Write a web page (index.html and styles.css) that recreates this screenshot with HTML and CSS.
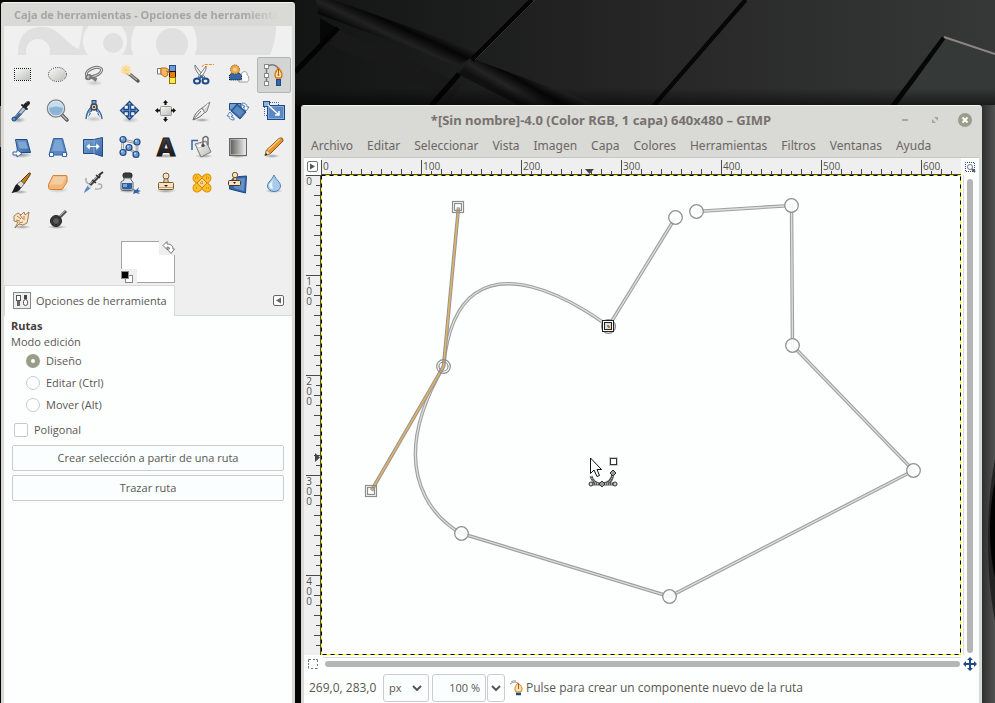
FILE: index.html
```html
<!DOCTYPE html>
<html lang="es">
<head>
<meta charset="utf-8">
<title>GIMP</title>
<link rel="stylesheet" href="styles.css">
</head>
<body>
<svg class="wallpaper" viewBox="0 0 995 703" preserveAspectRatio="xMidYMin slice" aria-hidden="true">
  <defs>
    <linearGradient id="wall" x1="295" y1="60" x2="995" y2="60" gradientUnits="userSpaceOnUse"><stop offset="0" stop-color="#131414"/><stop offset=".5" stop-color="#262626"/><stop offset="1" stop-color="#363837"/></linearGradient>
    <linearGradient id="ridge" x1="400" y1="14" x2="386" y2="44" gradientUnits="userSpaceOnUse"><stop offset="0" stop-color="#242424"/><stop offset=".35" stop-color="#050505"/><stop offset=".7" stop-color="#222"/><stop offset="1" stop-color="#080808"/></linearGradient>
    <linearGradient id="ridge2" x1="530" y1="71" x2="514" y2="99" gradientUnits="userSpaceOnUse"><stop offset="0" stop-color="#2a2a2a"/><stop offset=".4" stop-color="#060606"/><stop offset=".75" stop-color="#242424"/><stop offset="1" stop-color="#101010"/></linearGradient>
    <linearGradient id="side" x1="982" y1="0" x2="995" y2="0" gradientUnits="userSpaceOnUse"><stop offset="0" stop-color="#2f2f2f"/><stop offset="1" stop-color="#515151"/></linearGradient>
    <linearGradient id="shade" x1="0" y1="88" x2="0" y2="106" gradientUnits="userSpaceOnUse"><stop offset="0" stop-color="#000" stop-opacity="0"/><stop offset="1" stop-color="#000" stop-opacity=".55"/></linearGradient>
    <linearGradient id="bl" x1="0" y1="0" x2="1" y2="1"><stop offset="0" stop-color="#86add9"/><stop offset="1" stop-color="#3465a4"/></linearGradient>
    <linearGradient id="gr" x1="0" y1="0" x2="1" y2="1"><stop offset="0" stop-color="#fbfbfa"/><stop offset="1" stop-color="#babdb6"/></linearGradient>
    <linearGradient id="dk" x1="0" y1="0" x2="0" y2="1"><stop offset="0" stop-color="#4a4a4a"/><stop offset="1" stop-color="#0c0c0c"/></linearGradient>
    <linearGradient id="fade" x1="0" y1="0" x2="1" y2="0"><stop offset="0" stop-color="#555753"/><stop offset="1" stop-color="#f4f4f3"/></linearGradient>
    <radialGradient id="glow"><stop offset="0" stop-color="#fff"/><stop offset=".4" stop-color="#ffe79a"/><stop offset="1" stop-color="#fcd27a" stop-opacity="0"/></radialGradient>
    <radialGradient id="shadow"><stop offset="0" stop-color="#000" stop-opacity=".35"/><stop offset="1" stop-color="#000" stop-opacity="0"/></radialGradient>
  </defs>
  <rect width="995" height="703" fill="#060606"/>
  <rect x="295" width="700" height="106" fill="url(#wall)"/>
  <path d="M316 0H334L480 52L458 66L318 14Z" fill="url(#ridge)"/>
  <path d="M338 30L462 84L452 98L330 45Z" fill="#191919"/>
  <path d="M320 18L338 29L320 44Z" fill="#070707"/>
  <path d="M470 60L476 60L600 106H520L458 74Z" fill="url(#ridge2)"/>
  <path d="M532 0L472 60M459 74L431 106M338 28L295 72" stroke="#030303" stroke-width="5"/>
  <path d="M746 0L654 106M944 38L893 106" stroke="#070707" stroke-width="5"/>
  <path d="M749 0L657 106M535 0L475 60" stroke="#343434"/>
  <path d="M946 38L995 56V106H897Z" fill="#353937"/>
  <path d="M944 37L995 54" stroke="#8d8583" stroke-width="2"/>
  <rect x="295" y="86" width="700" height="20" fill="url(#shade)"/>
  <rect x="982" y="105" width="13" height="598" fill="url(#side)"/>
  <ellipse cx="1010" cy="540" rx="22" ry="110" fill="#222"/>
  <ellipse cx="1010" cy="530" rx="20" ry="72" fill="#020202"/>
  <path d="M0 106V147" stroke="#8a7f78" stroke-width="2"/>
</svg>

<main class="desktop">
<section class="window toolbox" aria-label="Caja de herramientas">
  <header class="titlebar titlebar-dim"><h1>Caja de herramientas - Opciones de herramienta</h1></header>
  <svg class="banner" viewBox="0 0 288 30" preserveAspectRatio="xMinYMin slice" aria-hidden="true">
    <rect width="288" height="30" fill="#f0f0f0"/>
    <path d="M14 29C14 10 22 1 38 1C56 1 60 17 75 23L79 0H272C272 12 269 22 266 29Z" fill="#e0e0e0"/>
    <circle cx="34" cy="25" r="12" fill="#f0f0f0"/>
    <circle cx="101" cy="15" r="22" fill="#f0f0f0"/><circle cx="109" cy="17" r="10" fill="#e0e0e0"/>
    <circle cx="160" cy="17" r="33" fill="#f0f0f0"/><circle cx="168" cy="18" r="16" fill="#e0e0e0"/>
    <path d="M0 29H288V30H0Z" fill="#efefef"/>
  </svg>
  <div class="tools">
    <button class="tool" aria-label="Selección rectangular"><svg viewBox="0 0 24 24"><rect x="4.500" y="5.500" width="16" height="12" fill="url(#gr)" stroke="#fff"/><rect x="4.500" y="5.500" width="16" height="12" fill="none" stroke="#111" stroke-dasharray="1 1" stroke-dashoffset=".5"/></svg></button>
    <button class="tool" aria-label="Selección elíptica"><svg viewBox="0 0 24 24"><ellipse cx="11.500" cy="11.500" rx="9" ry="7" fill="url(#gr)" stroke="#fff"/><ellipse cx="11.500" cy="11.500" rx="9" ry="7" fill="none" stroke="#111" stroke-dasharray="1 1.200"/></svg></button>
    <button class="tool" aria-label="Selección libre"><svg viewBox="0 0 24 24" fill="none"><ellipse cx="12.500" cy="20" rx="9" ry="3" fill="url(#shadow)" opacity=".5"/><ellipse cx="12" cy="9" rx="8" ry="4" transform="rotate(-20 12 9)" stroke="#777" stroke-width="3"/><ellipse cx="12" cy="9" rx="8" ry="4" transform="rotate(-20 12 9)" stroke="#ddd"/><path d="M7 12C3 13 3 17 7 16C10 15 9 12 7 12M9 14L15 16M9 14L14 18" stroke="#777" stroke-width="2"/><path d="M7 13C5 13 5 15 7 15" stroke="#ddd"/></svg></button>
    <button class="tool" aria-label="Selección difusa"><svg viewBox="0 0 24 24"><path d="M9 9L20 18" stroke="#5a5651" stroke-width="3.500" stroke-linecap="round"/><path d="M9 9L19 17" stroke="#b5b1a8" stroke-width="1.500"/><path d="M9 8L12 11" stroke="#fff3c5" stroke-width="3"/><circle cx="8" cy="7" r="6" fill="url(#glow)"/><path d="M8 3V11M4 7H12M5 4L11 10M11 4L5 10" stroke="#f0b65c" stroke-width=".5"/></svg></button>
    <button class="tool" aria-label="Selección por color"><svg viewBox="0 0 24 24"><path d="M3.500 5.500H7V11H3.500Z" fill="#fff" stroke="#777"/><path d="M7 5H12L15 7V9L13 10L14 12L11 14L7 11Z" fill="#f5b862" stroke="#b96a10"/><rect x="15.500" y="2.500" width="6" height="6" fill="#6f9bd0" stroke="#204a87"/><rect x="15.500" y="8.500" width="6" height="6" fill="#f57900" stroke="#111"/><rect x="15.500" y="14.500" width="6" height="6" fill="#fce94f" stroke="#8a7b00"/><path d="M12 8L18 10" stroke="#b96a10"/></svg></button>
    <button class="tool" aria-label="Tijeras"><svg viewBox="0 0 24 24" fill="none"><path d="M5 2C4 6 9 12 13 16L15 14C11 10 8 6 5 2Z" fill="#eee" stroke="#777"/><path d="M16 3C17 7 13 11 10 16L8 14C11 10 14 6 16 3Z" fill="#fff" stroke="#777"/><ellipse cx="7" cy="18" rx="3" ry="2.500" stroke="#204a87" stroke-width="2"/><ellipse cx="15.500" cy="18" rx="3" ry="2.500" stroke="#204a87" stroke-width="2"/><path d="M9 16L11 13L14 16" stroke="#3465a4" stroke-width="2"/><path d="M12 4L14 1.500H24" stroke="#ee8b1b" stroke-dasharray="3 1"/></svg></button>
    <button class="tool" aria-label="Selección de frente"><svg viewBox="0 0 24 24"><path d="M13 19C11 15 15 14 15 12C16 7 22 8 21 12C24 13 23 20 20 19Z" fill="#fff" stroke="#999"/><path d="M3.500 17V12L7 9H12L15.500 12V17Z" fill="#3465a4" stroke="#111" stroke-dasharray="1 1"/><circle cx="9" cy="6.500" r="4.500" fill="#f2a743" stroke="#6b4c14" stroke-dasharray="1 1"/><circle cx="9" cy="6.500" r="2" fill="#fbd087"/></svg></button>
    <button class="tool is-active" aria-label="Rutas" aria-pressed="true"><svg viewBox="0 0 24 24" fill="none"><path d="M4.500 3V20M5 4C10 0 15 2 17 7" stroke="#777" stroke-width="1.500"/><rect x="2.500" y="1.500" width="4" height="4" fill="#fff" stroke="#888"/><rect x="2.500" y="10.500" width="4" height="4" fill="#fff" stroke="#888"/><rect x="2.500" y="18.500" width="4" height="4" fill="#fff" stroke="#888"/><path d="M16.500 5C13 9 12 12 14 15H19C21 12 20 9 16.500 5Z" fill="#fbe2b6" stroke="#d87a0e" stroke-width="1.500"/><path d="M16.500 6V11" stroke="#a85a00"/><circle cx="16.500" cy="12" r="1" fill="#a85a00"/><rect x="14.500" y="16.500" width="4" height="6" fill="#3465a4" stroke="#204a87"/></svg></button>

    <button class="tool" aria-label="Recoge-color"><svg viewBox="0 0 24 24"><ellipse cx="8" cy="21" rx="8" ry="3" fill="url(#shadow)"/><path d="M3 20L13 8L16 10L6 21Z" fill="#a8c4e4" stroke="#555"/><path d="M3 21L9 14L12 15L6 21Z" fill="#3465a4"/><circle cx="4" cy="20" r="2" fill="#5c8bc5" stroke="#204a87"/><path d="M12 6L17 10" stroke="#222" stroke-width="2" stroke-linecap="round"/><path d="M15 7L18 4" stroke="#222" stroke-width="4" stroke-linecap="round"/><path d="M16 4L18 2" stroke="#777"/></svg></button>
    <button class="tool" aria-label="Ampliación"><svg viewBox="0 0 24 24"><path d="M16 16L21 21" stroke="#555" stroke-width="3.500" stroke-linecap="round"/><path d="M16 16L21 21" stroke="#bbb" stroke-width="1.500"/><circle cx="10" cy="9.500" r="8.500" fill="#8db4d6" stroke="#808080" stroke-width="1.500"/><path d="M3 9A7 7 0 0 1 17 9Q10 6 3 9Z" fill="#c6deee"/><circle cx="10" cy="9.500" r="7.500" fill="none" stroke="#e4edf3"/></svg></button>
    <button class="tool" aria-label="Medida"><svg viewBox="0 0 24 24" fill="none"><ellipse cx="12" cy="20" rx="10" ry="3" fill="url(#shadow)" opacity=".5"/><path d="M9 8C6 11 4 15 4 20L8 15L11 8M14 8C17 11 20 15 20 20L16 15L13 8" fill="#729fcf" stroke="#204a87"/><path d="M7 14L5 20M17 14L19 20M8 14Q12 11 16 14" stroke="#fff"/><rect x="10" y="1.500" width="4" height="4" fill="#729fcf" stroke="#204a87"/><circle cx="12" cy="8" r="3" fill="#ccc" stroke="#444" stroke-width="1.500"/><circle cx="12" cy="8" r="1" fill="#222"/></svg></button>
    <button class="tool" aria-label="Mover"><svg viewBox="0 0 24 24"><ellipse cx="12" cy="21" rx="9" ry="3" fill="url(#shadow)" opacity=".6"/><path d="M11.500 2.500L15 6H12.500V10.500H17V8L20.500 11.500L17 15V12.500H12.500V17H15L11.500 20.500L8 17H10.500V12.500H6V15L2.500 11.500L6 8V10.500H10.500V6H8Z" fill="#7da7d8" stroke="#204a87" stroke-width="1.300"/></svg></button>
    <button class="tool" aria-label="Alineación"><svg viewBox="0 0 24 24"><rect x="6.500" y="7.500" width="11" height="9" rx="1" fill="url(#gr)" stroke="#999"/><path d="M11.500 1L14 4H12.500V6H10.500V4H9ZM11.500 23L9 20H10.500V18H12.500V20H14ZM1 11.500L4 9V10.500H6V12.500H4V14ZM22 11.500L19 14V12.500H17V10.500H19V9Z" fill="#111"/></svg></button>
    <button class="tool" aria-label="Recorte"><svg viewBox="0 0 24 24"><ellipse cx="12" cy="21" rx="8" ry="2" fill="url(#shadow)"/><path d="M3 21C5 14 8 12 12 9L15 13C12 17 8 19 3 21Z" fill="#eee" stroke="#666"/><path d="M3 21L11 12" stroke="#777"/><path d="M12 9L20 3L17 12L15 14Z" fill="#d3d7cf" stroke="#888"/><path d="M14 10L18 5" stroke="#fff"/></svg></button>
    <button class="tool" aria-label="Rotar"><svg viewBox="0 0 24 24"><path d="M3.500 4.500H15V11H3.500Z" fill="#729fcf" stroke="#204a87"/><path d="M11 5L20 13L14 20L5 12Z" fill="#3465a4" stroke="#204a87"/><path d="M11 7L18 13L14 18L7 12Z" fill="#5b89c3"/><path d="M16 4Q21 4 21 8H23L20 12L17 8H19Q19 6 16 6ZM8 21Q3 21 3 17H1L4 13L7 17H5Q5 19 8 19Z" fill="#fff" stroke="#3465a4" stroke-width=".8"/></svg></button>
    <button class="tool" aria-label="Escalar"><svg viewBox="0 0 24 24"><rect x="5.500" y="6.500" width="17" height="14" fill="#5b89c3" stroke="#204a87"/><rect x="6.500" y="7.500" width="15" height="12" fill="none" stroke="#87acd9"/><rect x="1.500" y="2.500" width="6" height="5" fill="#8fb2dc" stroke="#204a87"/><path d="M8 3.500H16.500V7M2.500 8V16.500H5" fill="none" stroke="#3465a4" stroke-dasharray="1 1"/><path d="M6 6L17 16M17 12V16H13" fill="none" stroke="#fff" stroke-width="1.500"/></svg></button>

    <button class="tool" aria-label="Inclinar"><svg viewBox="0 0 24 24"><ellipse cx="12" cy="20" rx="10" ry="3" fill="url(#shadow)"/><path d="M5.500 4.500H17L20.500 17.500H8Z" fill="url(#bl)" stroke="#204a87"/><path d="M7 6H16L18.500 14H9Z" fill="#7ea5d4" stroke="#3465a4" stroke-width=".5"/><path d="M3 17H7V14.500L12 18.500L7 22V20H3Z" fill="#fff" stroke="#3465a4"/></svg></button>
    <button class="tool" aria-label="Perspectiva"><svg viewBox="0 0 24 24"><path d="M7.500 3.500H16.500L21 20H3Z" fill="#5b89c3" stroke="#3465a4"/><path d="M9 5H15L18 16H6Z" fill="#7ba3d3"/><path d="M3.500 17.500H7.500V21.500H3.500ZM16.500 17.500H20.500V21.500H16.500Z" fill="#fff" stroke="#3465a4"/></svg></button>
    <button class="tool" aria-label="Voltear"><svg viewBox="0 0 24 24"><path d="M1.500 4.500H12L20.500 2.500V21.500L12 18.500H1.500Z" fill="url(#bl)" stroke="#204a87"/><path d="M12 4.500V18.500" stroke="#87acd9"/><path d="M4 11.500L8 7.500V10.500H14V7.500L18 11.500L14 15.500V12.500H8V15.500Z" fill="#fff" stroke="#3465a4" stroke-width=".6"/></svg></button>
    <button class="tool" aria-label="Transformación de jaula"><svg viewBox="0 0 24 24"><path d="M5 5L19 8L19 20L11 13L4 18Z" fill="none" stroke="#888" stroke-width="2.500"/><path d="M5 5L19 8L19 20L11 13L4 18Z" fill="none" stroke="#eee"/><g fill="#6f9bd0" stroke="#204a87" stroke-width="1.200"><circle cx="5" cy="4.500" r="3"/><circle cx="19" cy="7" r="3"/><circle cx="11" cy="12.500" r="3"/><circle cx="5" cy="17.500" r="3"/><circle cx="18" cy="19.500" r="3"/></g><g fill="#c3d8ef"><circle cx="4" cy="3.500" r="1"/><circle cx="18" cy="6" r="1"/><circle cx="10" cy="11.500" r="1"/><circle cx="4" cy="16.500" r="1"/><circle cx="17" cy="18.500" r="1"/></g></svg></button>
    <button class="tool" aria-label="Texto"><svg viewBox="0 0 24 24"><ellipse cx="12" cy="21" rx="11" ry="2" fill="url(#shadow)"/><text class="glyph" x="12" y="21">A</text></svg></button>
    <button class="tool" aria-label="Relleno"><svg viewBox="0 0 24 24"><ellipse cx="14" cy="21" rx="9" ry="2" fill="url(#shadow)"/><path d="M2 15V5.500H8" fill="none" stroke="#3465a4" stroke-width="1.500"/><path d="M5 9L16 6L21 17L11 22Z" fill="url(#gr)" stroke="#777"/><path d="M6 10L15 7L17 10L8 13Z" fill="#fff" stroke="#aaa" stroke-width=".6"/><path d="M13 10V3Q16 0 18 3V10" fill="none" stroke="#666" stroke-width="1.400"/><circle cx="13" cy="10.500" r="1.800" fill="#555"/></svg></button>
    <button class="tool" aria-label="Degradado"><svg viewBox="0 0 24 24"><ellipse cx="12" cy="21" rx="10" ry="2" fill="url(#shadow)"/><rect x="3.500" y="3.500" width="17" height="17" fill="url(#fade)" stroke="#666"/><rect x="4.500" y="4.500" width="15" height="15" fill="none" stroke="#ddd" stroke-opacity=".5"/></svg></button>
    <button class="tool" aria-label="Lápiz"><svg viewBox="0 0 24 24"><ellipse cx="10" cy="21" rx="8" ry="2" fill="url(#shadow)"/><path d="M3 20.500L4.500 15L17 3.500Q21 1.500 21 6L8.500 18.500Z" fill="#e9952f" stroke="#8a5310"/><path d="M6 15L18 4" stroke="#fbc77d" stroke-width="1.500"/><path d="M3 20.500L4.500 15L8.500 18.500Z" fill="#f3dfc0" stroke="#8a6a3a" stroke-width=".6"/><path d="M3 20.500L4 18L5.500 19.500Z" fill="#111"/></svg></button>

    <button class="tool" aria-label="Pincel"><svg viewBox="0 0 24 24"><ellipse cx="10" cy="21" rx="8" ry="2" fill="url(#shadow)"/><path d="M11 10L19 2Q21 1 20 4L14 13Z" fill="#c27e1c" stroke="#5a3a0c"/><path d="M11 10L14 13L11 17L7 13Z" fill="#ddd" stroke="#777"/><path d="M7 13L11 17C9 21 6 21 1.500 22C4 19 4 15 7 13Z" fill="#1c1c1c"/></svg></button>
    <button class="tool" aria-label="Goma de borrar"><svg viewBox="0 0 24 24"><ellipse cx="12" cy="19" rx="11" ry="3" fill="url(#shadow)" opacity=".5"/><path d="M2.500 13.500L7 4.500H20Q21.500 4.500 21 7V11L16 18.500H4Q2 18 2.500 13.500Z" fill="#f3b77a" stroke="#d8812f"/><path d="M3.500 13.500L7.500 5.500H20L16 13.500Z" fill="#f5cda2"/></svg></button>
    <button class="tool" aria-label="Aerógrafo"><svg viewBox="0 0 24 24"><path d="M16 13C21 12 22 19 13 18M4 7Q3 13 9 13" fill="none" stroke="#aaa" stroke-width="1.500"/><path d="M8 14L18 4" stroke="#444" stroke-width="3"/><path d="M8 13L18 3" stroke="#aaa"/><path d="M14 4L18 7M10 9L14 12" stroke="#333" stroke-width="1.500"/><path d="M17 4L21 1" stroke="#333" stroke-width="2"/><path d="M6 14L9 17L5 20L2 22L3 19Z" fill="#5b89c3"/><path d="M6 14L9 17" stroke="#ddd" stroke-width="2"/></svg></button>
    <button class="tool" aria-label="Tinta"><svg viewBox="0 0 24 24"><ellipse cx="10" cy="20" rx="9" ry="2" fill="url(#shadow)"/><rect x="5" y="2" width="9" height="5" rx="2" fill="#3c3c3c" stroke="#222"/><path d="M6 7H13V9L15 11V18Q15 19.500 13 19.500H5Q3 19.500 3 18V11L6 9Z" fill="#e2e6ea" stroke="#666"/><path d="M4 12H14V17Q14 18.500 12 18.500H6Q4 18.500 4 17Z" fill="#2f5f9f"/><path d="M5 13H9V16H5Z" fill="#7ea5d4"/><path d="M15 18L18 19L21 16L20 19L23 20L20 21L22 23L18 22L15 23L16 20Z" fill="#3465a4"/></svg></button>
    <button class="tool" aria-label="Clonar"><svg viewBox="0 0 24 24"><ellipse cx="12" cy="20" rx="10" ry="2" fill="url(#shadow)"/><path d="M10.500 7H13.500L14.500 12H9.500Z" fill="#e4c9a0" stroke="#7a5b2e"/><circle cx="12" cy="5" r="3" fill="#f3e2c7" stroke="#7a5b2e"/><rect x="4.500" y="11.500" width="15" height="7" rx="1" fill="#f6e3c6" stroke="#7a5b2e"/><path d="M5 16.500H19" stroke="#caa56c"/><path d="M10 14H14L12 16Z" fill="#222"/></svg></button>
    <button class="tool" aria-label="Sanear"><svg viewBox="0 0 24 24"><g stroke-linecap="round"><path d="M7 7L17 17M17 7L7 17" stroke="#e08a00" stroke-width="9"/><path d="M7 7L17 17M17 7L7 17" stroke="#fcbf26" stroke-width="7"/></g><path d="M12 7L17 12L12 17L7 12Z" fill="#f6d68b" stroke="#d97c00"/><path d="M10 12H14M12 10V14M6 5H8M5 7H8M16 5H18M16 7H19M6 17H8M16 17H19" stroke="#c96e00" stroke-dasharray="1 1"/></svg></button>
    <button class="tool" aria-label="Clonar en perspectiva"><svg viewBox="0 0 24 24"><path d="M3.500 12L8 6L20.500 5L19.500 22L3.500 18Z" fill="#3465a4" stroke="#204a87"/><path d="M8 8L19 7L18 20L8 17Z" fill="#6390c8"/><path d="M8 6H10L11 10H7Z" fill="#e4c9a0" stroke="#7a5b2e"/><circle cx="9" cy="4" r="2.700" fill="#f3e2c7" stroke="#7a5b2e"/><rect x="2.500" y="9.500" width="12" height="5" rx="1" fill="#f6e3c6" stroke="#4d3a1d"/><path d="M7 11H10L8.500 13Z" fill="#222"/></svg></button>
    <button class="tool" aria-label="Desenfocar"><svg viewBox="0 0 24 24"><ellipse cx="12" cy="20" rx="9" ry="2" fill="url(#shadow)"/><path d="M12 4C10 9 5.500 11 5.500 15A6.500 5.500 0 0 0 18.500 15C18.500 11 14 9 12 4Z" fill="#a9cbe9" stroke="#4a7fbd"/><path d="M12 7C10 11 7 12 7 15Q8 18 11 18Q9 12 12 7Z" fill="#e8f3fb"/></svg></button>

    <button class="tool" aria-label="Empaste"><svg viewBox="0 0 24 24"><ellipse cx="12" cy="20" rx="9" ry="2" fill="url(#shadow)"/><path d="M4 9L8 6L11 8L14 5L15 8L19 5L18 11L17 16L13 18L9 17L5 21L8 15L4 14Z" fill="#fbe6cb" stroke="#9b7040" stroke-width=".9"/><path d="M7 9L11 12M10 8L13 12M14 9L14 13M6 13L10 14M9 16L13 15" stroke="#a87438" stroke-width=".9"/></svg></button>
    <button class="tool" aria-label="Blanquear / Ennegrecer"><svg viewBox="0 0 24 24"><ellipse cx="11" cy="20" rx="10" ry="2" fill="url(#shadow)"/><path d="M13 11L20 4" stroke="#555" stroke-width="3"/><path d="M13 10L20 3" stroke="#aaa"/><circle cx="10" cy="14" r="5.500" fill="#3b3b3b" stroke="#222"/><circle cx="10" cy="14" r="3.500" fill="#5c5c5c" stroke="#2c2c2c"/></svg></button>
  </div>

  <div class="color-area">
    <div class="swatch">
      <button class="swap" aria-label="Intercambiar colores"><svg viewBox="0 0 16 14"><path d="M4 4.500L8 .5V3Q14 3 14 8H15.500L12 12.500L8 8H10.500Q11 6 8 6V8.500Z" fill="#fff" stroke="#777"/></svg></button>
      <button class="reset" aria-label="Colores predeterminados"><span class="mini-bg"></span><span class="mini-fg"></span></button>
    </div>
  </div>

  <div class="tabs">
    <button class="tab" role="tab" aria-selected="true">
      <svg viewBox="0 0 20 20"><rect x="1.500" y="1.500" width="17" height="16" fill="#eee" stroke="#888"/><rect x="4.500" y="4.500" width="4" height="5" fill="#fff" stroke="#555"/><rect x="5" y="10" width="3" height="5" fill="#666"/><rect x="11.500" y="8.500" width="4" height="6" rx="2" fill="#fff" stroke="#555"/><rect x="12" y="4" width="3" height="4" fill="#444"/></svg>
      Opciones de herramienta
    </button>
    <button class="dock-menu" aria-label="Configurar pestaña"><svg viewBox="0 0 11 11"><rect x=".5" y=".5" width="10" height="10" rx="1.500" fill="#fff" stroke="#666"/><path d="M8 2.500V8.500L3 5.500Z" fill="#666"/></svg></button>
  </div>
  <form class="options">
    <h2>Rutas</h2>
    <fieldset>
      <legend>Modo edición</legend>
      <label><input type="radio" name="mode" checked>Diseño</label>
      <label><input type="radio" name="mode">Editar (Ctrl)</label>
      <label><input type="radio" name="mode">Mover (Alt)</label>
    </fieldset>
    <label class="check"><input type="checkbox">Poligonal</label>
    <button type="button" class="action">Crear selección a partir de una ruta</button>
    <button type="button" class="action">Trazar ruta</button>
  </form>
</section>

<section class="window editor" aria-label="Ventana de imagen">
  <header class="titlebar">
    <h1>*[Sin nombre]-4.0 (Color RGB, 1 capa) 640x480 – GIMP</h1>
    <div class="window-buttons">
      <button aria-label="Minimizar"><svg viewBox="0 0 14 14"><path d="M4 7H10" stroke="#a5a5a2" stroke-width="2"/></svg></button>
      <button aria-label="Maximizar"><svg viewBox="0 0 14 14"><path d="M6 4H10V8ZM4 6V10H8Z" fill="#a5a5a2"/></svg></button>
      <button aria-label="Cerrar"><svg viewBox="0 0 14 14"><circle cx="7" cy="7" r="7" fill="#9b9d8b"/><path d="M4.500 4.500L9.500 9.500M9.500 4.500L4.500 9.500" stroke="#fff" stroke-width="2"/></svg></button>
    </div>
  </header>
  <nav class="menubar">
    <a href="#">Archivo</a><a href="#">Editar</a><a href="#">Seleccionar</a><a href="#">Vista</a><a href="#">Imagen</a><a href="#">Capa</a><a href="#">Colores</a><a href="#">Herramientas</a><a href="#">Filtros</a><a href="#">Ventanas</a><a href="#">Ayuda</a>
  </nav>
  <div class="workspace">
    <button class="corner" aria-label="Menú de imagen"><svg width="11" height="11" viewBox="0 0 11 11"><rect x=".5" y=".5" width="10" height="10" rx="1.500" fill="#fff" stroke="#777"/><path d="M3 2.500V8.500L8 5.500Z" fill="#555"/></svg></button>
    <svg class="ruler" aria-hidden="true">
      <defs><pattern id="hticks" width="100" height="17" patternUnits="userSpaceOnUse"><path d="M.5 2V17M10.500 13V17M20.500 11V17M30.500 13V17M40.500 11V17M50.500 13V17M60.500 11V17M70.500 13V17M80.500 11V17M90.500 13V17" stroke="#4a4a4a"/></pattern></defs>
      <rect width="100%" height="17" fill="url(#hticks)"/>
      <rect y="16" width="100%" height="1" fill="#4a4a4a"/>
      <text x="2" y="12">0</text><text x="102" y="12">100</text><text x="202" y="12">200</text><text x="302" y="12">300</text><text x="402" y="12">400</text><text x="502" y="12">500</text><text x="602" y="12">600</text>
      <path d="M264 11H273L268.500 16Z" fill="#444"/>
    </svg>
    <button class="corner" aria-label="Ampliar con la ventana"><svg width="12" height="12" viewBox="0 0 12 12" fill="none"><rect x="1.500" y="1.500" width="9" height="9" stroke="#204a87" stroke-dasharray="1 1" stroke-dashoffset=".5"/><circle cx="6" cy="6" r="2.500" stroke="#777"/><path d="M8 8L11 11" stroke="#555" stroke-width="2"/></svg></button>

    <svg class="ruler" aria-hidden="true">
      <defs><pattern id="vticks" width="17" height="100" patternUnits="userSpaceOnUse"><path d="M2 .5H17M12 10.500H17M10 20.500H17M12 30.500H17M10 40.500H17M12 50.500H17M10 60.500H17M12 70.500H17M10 80.500H17M12 90.500H17" stroke="#4a4a4a"/></pattern></defs>
      <rect width="17" height="100%" fill="url(#vticks)"/>
      <rect x="16" width="1" height="100%" fill="#4a4a4a"/>
      <g class="vlabels"><text x="5" y="10">0</text>
      <text x="5" y="110">1</text><text x="5" y="120">0</text><text x="5" y="130">0</text>
      <text x="5" y="210">2</text><text x="5" y="220">0</text><text x="5" y="230">0</text>
      <text x="5" y="310">3</text><text x="5" y="320">0</text><text x="5" y="330">0</text>
      <text x="5" y="410">4</text><text x="5" y="420">0</text><text x="5" y="430">0</text></g>
      <path d="M11 278V287L16 282.500Z" fill="#444"/>
    </svg>
    <div class="canvas">
      <svg class="drawing" viewBox="0 0 640 480" preserveAspectRatio="xMinYMin" role="img" aria-label="Ruta">
        <defs><path id="route" d="M354.500 42.500L287.500 151.500C287.500 151.500 137.500 32.500 122.500 191.500C50.500 316.500 140.500 358.500 140.500 358.500L348.500 421.500L592.500 295.500L471.500 170.500L470.500 30.500L375.500 36.500"/><path id="handles" d="M137.500 32.500L122.500 191.500L50.500 315.500"/></defs>
        <g fill="none"><use href="#route" stroke="#a0a0a0" stroke-width="3.500"/><use href="#route" stroke="#dedede" stroke-width="1.300"/>
        <use href="#handles" stroke="#949494" stroke-width="3.500"/><use href="#handles" stroke="#dfb266" stroke-width="1.600"/></g>
        <g fill="#fff" fill-opacity=".88" stroke="#919191" stroke-width="1.300"><circle cx="354.500" cy="42.500" r="6.800"/><circle cx="375.500" cy="36.500" r="6.800"/><circle cx="470.500" cy="30.500" r="6.800"/><circle cx="471.500" cy="170.500" r="6.800"/><circle cx="592.500" cy="295.500" r="6.800"/><circle cx="348.500" cy="421.500" r="6.800"/><circle cx="140.500" cy="358.500" r="6.800"/></g>
        <g fill="none" stroke="#8d8d8d" stroke-width="1.200"><circle cx="122.500" cy="191.500" r="6.800"/><circle cx="122.500" cy="191.500" r="4.500"/><circle cx="287.500" cy="151.500" r="7" fill="#ddd"/>
        <rect x="131.500" y="26.500" width="11" height="11"/><rect x="133.500" y="28.500" width="7" height="7"/><rect x="44.500" y="310.500" width="11" height="11"/><rect x="46.500" y="312.500" width="7" height="7"/></g>
        <rect x="281.500" y="145.500" width="11" height="11" fill="#fff" stroke="#222"/><rect x="283.500" y="147.500" width="7" height="7" fill="#ddd" stroke="#222"/><rect x="286" y="150" width="2" height="2" fill="#888"/><rect x="287" y="151" width="2" height="2" fill="#c87810"/>
        <path d="M269.500 283V298.500L273 295L276 301.500L278.500 300.500L276 294.500H280.500Z" fill="#fff" stroke="#111"/>
        <rect x="288.500" y="282.500" width="8" height="8" fill="none" stroke="#ccc"/><rect x="289.500" y="283.500" width="6" height="6" fill="#fff" stroke="#333"/>
        <path d="M270 301Q272 309 281 309Q291 309 292 298M270 309H293" fill="none" stroke="#555" stroke-width="3"/><path d="M270 301Q272 309 281 309Q291 309 292 298M270 309H293" fill="none" stroke="#ddd" stroke-dasharray="1 1"/>
        <path d="M292 295L295 298L292 301L289 298ZM281 306L284 309L281 312L278 309Z" fill="#999" stroke="#333"/><circle cx="270" cy="309" r="2" fill="#ccc" stroke="#333"/><circle cx="294" cy="309" r="2" fill="#ccc" stroke="#333"/>
      </svg>
      <svg class="ants" aria-hidden="true"><rect class="ants-base"/><rect class="ants-dash"/></svg>
    </div>
    <div class="scroll-v"><span></span></div>

    <button class="corner" aria-label="Máscara rápida"><svg width="12" height="12" viewBox="0 0 12 12"><path d="M1.500 4V1.500H4M6 1.500H8M10.500 4V1.500H9M10.500 6V8M10.500 10.500H8M6 10.500H4M1.500 10.500V8M1.500 7V5" fill="none" stroke="#777"/></svg></button>
    <div class="scroll-h"><span></span></div>
    <button class="corner" aria-label="Navegar por la imagen"><svg width="14" height="14" viewBox="0 0 14 14"><path d="M7 0L10 3H8V6H11V4L14 7L11 10V8H8V11H10L7 14L4 11H6V8H3V10L0 7L3 4V6H6V3H4Z" fill="#204a87"/></svg></button>
  </div>
  <footer class="status">
    <output class="coords">269,0, 283,0</output>
    <span class="unit"><select aria-label="Unidad"><option>px</option></select><svg viewBox="0 0 10 6"><path d="M1 1L5 5L9 1" fill="none" stroke="#555" stroke-width="2"/></svg></span>
    <input class="zoom" type="text" value="100 %" aria-label="Ampliación">
    <button class="zoom-menu" aria-label="Elegir ampliación"><svg viewBox="0 0 10 6"><path d="M1 1L5 5L9 1" fill="none" stroke="#555" stroke-width="2"/></svg></button>
    <svg class="pen" viewBox="0 0 14 16" fill="none"><path d="M0 4Q5 0 9 4M1 2Q4 0 6 1" stroke="#999"/><path d="M8 3C5 6 4 9 6 12H11C13 9 12 6 8 3Z" fill="#fbe2b6" stroke="#c9790e"/><path d="M8.500 4V9" stroke="#a85a00"/><path d="M6 14H11" stroke="#204a87" stroke-width="2.500"/></svg>
    <span class="hint">Pulse para crear un componente nuevo de la ruta</span>
  </footer>
</section>
</main>
</body>
</html>
```
FILE: styles.css
```css
* { box-sizing: border-box; }

body {
  margin: 0;
  height: 100vh;
  overflow: hidden;
  background: #060606;
  color: #5a5652;
  font: 11px/16px "Open Sans", "Noto Sans", sans-serif;
}

h1, h2 { margin: 0; font-size: inherit; }
button, input, select { font: inherit; color: inherit; }
button { padding: 0; border: 0; background: none; }
svg { display: block; }

.wallpaper { position: absolute; width: 100%; height: 100%; }

/* Windows placed freely on the desktop */
.desktop { position: relative; height: 100vh; }
.window {
  position: absolute;
  bottom: 0;
  display: flex;
  flex-direction: column;
  border: solid #d9d9d6;
  border-width: 0 3px;
  border-radius: 3px 3px 0 0;
  background: #fdfefe;
}
.toolbox { top: 2px; left: 1px; width: 294px; }
.editor { top: 105px; left: 301px; right: 13px; }

.titlebar {
  display: flex;
  align-items: center;
  flex: none;
  height: 29px;
  border-top: 1px solid #f4f4f2;
  background: #d9d9d6;
  color: #77726f;
  font-family: "Noto Sans", sans-serif;
  font-size: 13px;
}
.titlebar h1 { flex: 1; text-align: center; white-space: nowrap; }
.titlebar-dim { height: 24px; padding: 0 14px 0 10px; font-size: 11px; color: #a6a6a4; }
.titlebar-dim h1 {
  overflow: hidden;
  text-align: left;
  mask-image: linear-gradient(to right, #000 88%, transparent);
}
.window-buttons { display: flex; gap: 16px; margin-right: 7px; }
.window-buttons svg { width: 14px; height: 14px; }

/* Toolbox */
.banner { flex: none; width: 100%; height: 30px; background: #f0f0f0; }
.tools {
  display: grid;
  grid-template-columns: repeat(8, 1fr);
  grid-auto-rows: 36px;
  padding-top: 1px;
  background: #efefef;
}
.tool { display: grid; place-items: center; margin: 0 1px; border: 1px solid transparent; border-radius: 2px; }
.tool svg { width: 24px; height: 24px; overflow: visible; }
.tool.is-active { border-color: #b4b4b2; background: #d3d5d4; }
.glyph { font: 900 24px "DejaVu Sans", sans-serif; text-anchor: middle; fill: url(#dk); stroke: #1c1c1c; }

.color-area { display: grid; place-items: center; padding: 4px 0 2px; background: #efefef; }
.swatch { position: relative; width: 54px; height: 42px; border: 1px solid #a5a5a5; background: #fff; }
.swap { position: absolute; top: -1px; right: -1px; width: 16px; height: 14px; background: #efefef; }
.reset { position: absolute; left: -1px; bottom: -1px; width: 16px; height: 14px; background: #efefef; }
.mini-fg, .mini-bg { position: absolute; width: 8px; height: 8px; border: 1px solid #888; }
.mini-fg { top: 2px; left: 0; background: #000; }
.mini-bg { top: 6px; left: 4px; background: #fff; }

.tabs { display: flex; justify-content: space-between; background: #efefef; box-shadow: inset 0 -1px #d9d9d6; }
.tab {
  display: flex;
  align-items: center;
  gap: 4px;
  height: 31px;
  padding: 0 7px;
  border: solid #d9d9d6;
  border-width: 1px 1px 0;
  background: #fdfefe;
}
.tab svg { width: 20px; height: 20px; }
.dock-menu { margin-right: 8px; }
.dock-menu svg { width: 11px; height: 11px; }

.options { display: flex; flex-direction: column; padding: 2px 8px; }
.options h2 { color: #44403c; margin-left: -1px; }
.options fieldset { display: flex; flex-direction: column; margin: 0 0 3px -1px; padding: 0; border: 0; }
.options legend { padding: 0; }
.options label { display: flex; align-items: center; gap: 6px; height: 22px; }
.options fieldset label { padding-left: 15px; }
.options input {
  appearance: none;
  width: 14px;
  height: 14px;
  margin: 0;
  border: 1px solid #c9cbca;
  border-radius: 2px;
  background: #fff;
}
.options input[type="radio"] { border-radius: 50%; }
.options input[type="radio"]:checked { border: 5px solid #9b9d8b; }
.options .check { margin: 0 0 4px 2px; }
.action { height: 26px; margin-bottom: 4px; border: 1px solid #cbcdcc; border-radius: 2px; background: #fafefe; }

/* Image window */
.menubar {
  display: flex;
  flex: none;
  gap: 14px;
  height: 24px;
  padding: 4px 7px 3px;
  border-bottom: 1px solid #c6c6c2;
  background: #d9d9d6;
  font-family: "Noto Sans", sans-serif;
  font-size: 12px;
}
.menubar a { color: #6b6764; text-decoration: none; }
.workspace {
  display: grid;
  flex: 1;
  grid-template-columns: 17px 1fr 18px;
  grid-template-rows: 17px 1fr 17px;
  min-height: 0;
}
.corner { display: grid; place-items: center; }
.ruler { width: 100%; height: 100%; background: #efefef; fill: #55524f; font-size: 10px; }
.vlabels { text-anchor: middle; }
.canvas { position: relative; min-height: 0; }
.drawing { width: 100%; height: 100%; }
.ants { position: absolute; inset: 0; width: 100%; height: 100%; fill: none; }
.ants rect { x: 0.5px; y: 0.5px; width: calc(100% - 1px); height: calc(100% - 1px); stroke: #ff0; }
.ants .ants-dash { stroke: #000; stroke-dasharray: 4 4; }
.scroll-v { display: flex; margin-left: 2px; padding: 4px 6px 2px 3px; border-left: 1px solid #dcdcdc; }
.scroll-h { display: flex; margin: 2px 0 0 2px; padding: 3px 1px 5px 2px; border-top: 1px solid #dcdcdc; }
.scroll-v span, .scroll-h span { flex: 1; border-radius: 3px; background: #b5b5b5; }

.status { display: flex; align-items: center; flex: none; height: 31px; padding-left: 5px; font-size: 12px; }
.coords { width: 74px; }
.unit { position: relative; width: 46px; margin-right: 3px; font-size: 11px; }
.unit select, .zoom, .zoom-menu {
  width: 100%;
  height: 28px;
  padding: 0 5px;
  border: 1px solid #cbcdcc;
  border-radius: 3px;
  background: #fafefe;
}
.unit select { display: block; appearance: none; }
.unit svg { position: absolute; top: 11px; right: 7px; width: 10px; height: 6px; pointer-events: none; }
.zoom { width: 54px; text-align: right; font-size: 11px; }
.zoom-menu { width: 18px; margin: 0 5px 0 1px; padding: 0 3px; }
.zoom-menu svg { width: 10px; height: 6px; }
.pen { width: 14px; height: 16px; margin-right: 2px; }
.hint { white-space: nowrap; }
```
